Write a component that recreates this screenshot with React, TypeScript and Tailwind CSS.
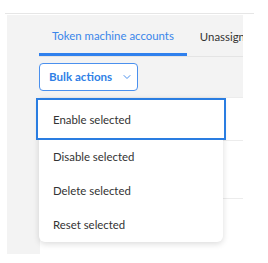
import { ChevronDown } from "lucide-react";

const items = ["Enable selected", "Disable selected", "Delete selected", "Reset selected"];

export default function App() {
  return (
    <div className="h-[263px] w-[268px] overflow-hidden bg-white pt-[13px] font-['Lato',sans-serif]">
      <div className="ml-[5px] w-[249px] border-t border-[#e6e6e6]" />
      <div className="relative ml-[7px] mt-px h-[239px] w-[236px] overflow-hidden bg-[#f3f3f3] pl-[32px]">
        {/* tabs */}
        <div className="flex h-[42px] items-stretch whitespace-nowrap border-b border-[#e4e4e4] text-[11.4px]">
          <div className="flex items-center border-b-[3px] border-[#2f80ed] px-[13px] pt-[3px] text-[#3a86ea]">
            Token machine accounts
          </div>
          <div className="flex items-center px-[13px] pt-[3px] text-[#333]">Unassigned</div>
        </div>

        {/* bulk actions */}
        <button className="mt-[6px] flex h-[28px] w-[99px] items-center gap-[9px] whitespace-nowrap rounded-[4px] border border-[#4a90ee] bg-white pl-[9px] text-[11.6px] font-bold text-[#2f7fe6]">
          Bulk actions
          <ChevronDown size={12} strokeWidth={2} className="text-[#4a90ee]" />
        </button>

        {/* table behind */}
        <div className="mt-[6px] ml-px bg-white">
          <div className="h-[43px] border-t border-[#ececec]" />
          <div className="h-[58px] border-t border-[#ececec]" />
          <div className="h-[60px] border-t border-[#ececec]" />
        </div>

        {/* menu */}
        <div className="absolute left-[32px] top-[83px] w-[184px] rounded-b-[6px] bg-white shadow-[0_2px_6px_rgba(0,0,0,0.14)]">
          {items.map((label, i) =>
            i === 0 ? (
              <div
                key={label}
                className="-mx-[3px] flex h-[42px] items-center border-2 border-[#2a7de1] bg-white pl-[15px] pt-[2px] text-[11.4px] text-[#333]"
              >
                {label}
              </div>
            ) : (
              <div key={label} className="flex h-[34px] items-center pb-px pl-[14px] text-[11.4px] text-[#333]">
                {label}
              </div>
            )
          )}
        </div>
      </div>
    </div>
  );
}
